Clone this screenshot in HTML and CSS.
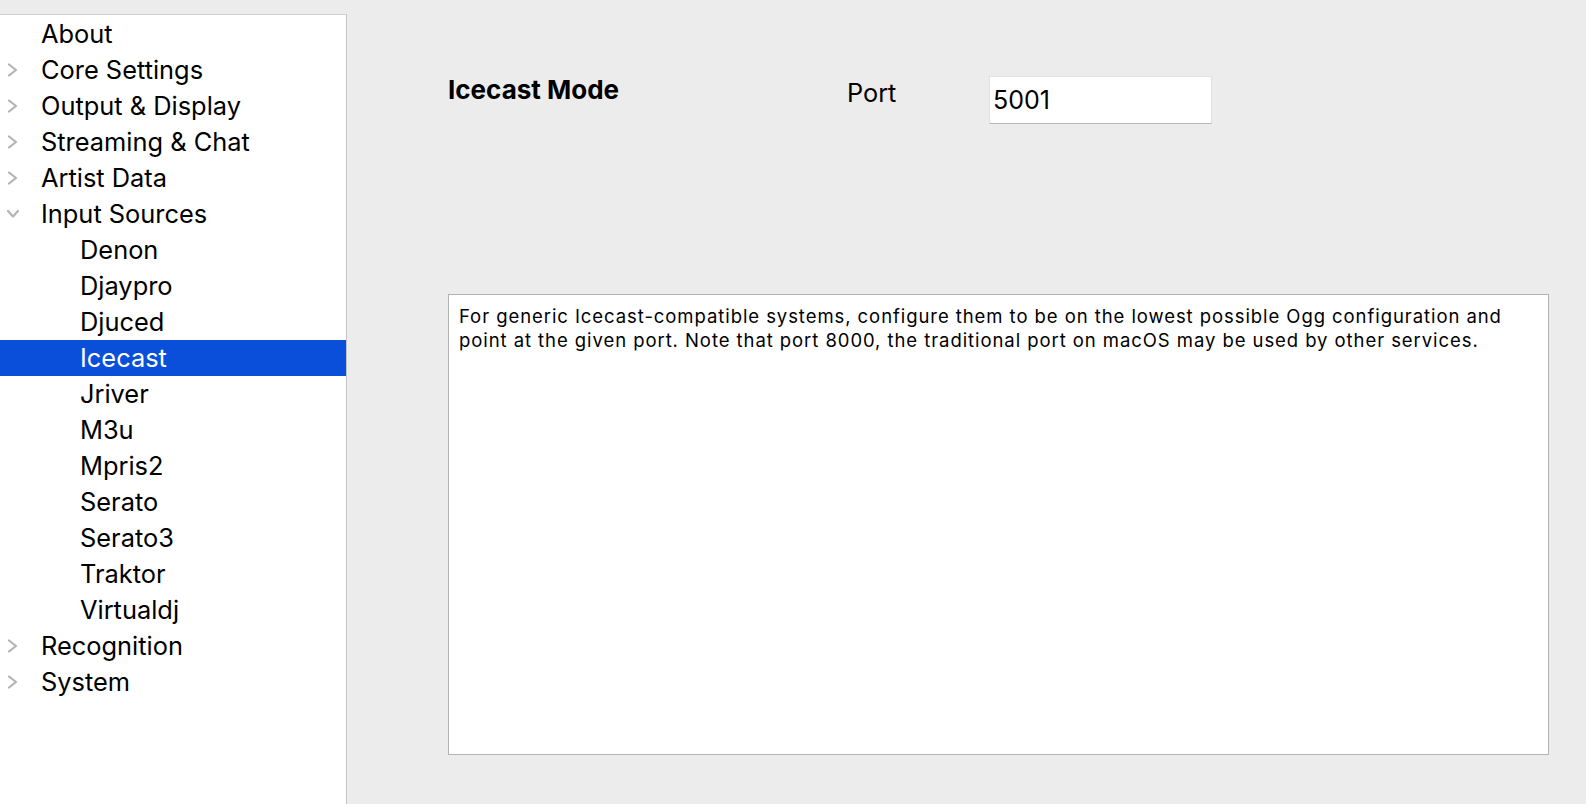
FILE: index.html
```html
<!DOCTYPE html>
<html>
<head>
<meta charset="utf-8">
<title>Icecast</title>
<link rel="stylesheet" href="styles.css">
</head>
<body>
<div class="window">
  <nav class="sidebar">
    <ul class="tree">
      <li class="row parent"><span class="twisty"></span><span class="label">About</span></li>
      <li class="row parent"><span class="twisty"><svg class="chev" width="12" height="14" viewBox="0 0 12 14"><polyline points="2,1.5 9,7 2,12.5"/></svg></span><span class="label">Core Settings</span></li>
      <li class="row parent"><span class="twisty"><svg class="chev" width="12" height="14" viewBox="0 0 12 14"><polyline points="2,1.5 9,7 2,12.5"/></svg></span><span class="label">Output &amp; Display</span></li>
      <li class="row parent"><span class="twisty"><svg class="chev" width="12" height="14" viewBox="0 0 12 14"><polyline points="2,1.5 9,7 2,12.5"/></svg></span><span class="label">Streaming &amp; Chat</span></li>
      <li class="row parent"><span class="twisty"><svg class="chev" width="12" height="14" viewBox="0 0 12 14"><polyline points="2,1.5 9,7 2,12.5"/></svg></span><span class="label">Artist Data</span></li>
      <li class="row parent"><span class="twisty"><svg class="chev" width="12" height="14" viewBox="0 0 12 14"><polyline points="1,4 6,9.5 11,4"/></svg></span><span class="label">Input Sources</span></li>
      <li class="row child"><span class="label">Denon</span></li>
      <li class="row child"><span class="label">Djaypro</span></li>
      <li class="row child"><span class="label">Djuced</span></li>
      <li class="row child selected"><span class="label">Icecast</span></li>
      <li class="row child"><span class="label">Jriver</span></li>
      <li class="row child"><span class="label">M3u</span></li>
      <li class="row child"><span class="label">Mpris2</span></li>
      <li class="row child"><span class="label">Serato</span></li>
      <li class="row child"><span class="label">Serato3</span></li>
      <li class="row child"><span class="label">Traktor</span></li>
      <li class="row child"><span class="label">Virtualdj</span></li>
      <li class="row parent"><span class="twisty"><svg class="chev" width="12" height="14" viewBox="0 0 12 14"><polyline points="2,1.5 9,7 2,12.5"/></svg></span><span class="label">Recognition</span></li>
      <li class="row parent"><span class="twisty"><svg class="chev" width="12" height="14" viewBox="0 0 12 14"><polyline points="2,1.5 9,7 2,12.5"/></svg></span><span class="label">System</span></li>
    </ul>
  </nav>
  <main class="content">
    <div class="header">
      <div class="title">Icecast Mode</div>
      <div class="port-label">Port</div>
      <div class="field">5001</div>
    </div>
    <div class="description">For generic Icecast-compatible systems, configure them to be on the lowest possible Ogg configuration and point at the given port. Note that port 8000, the traditional port on macOS may be used by other services.</div>
  </main>
</div>
</body>
</html>
```
FILE: styles.css
```css
html, body {
  margin: 0;
  padding: 0;
  height: 100%;
  background: #ececec;
  font-family: "Inter", "Liberation Sans", sans-serif;
  color: #000;
}
.window {
  display: flex;
  height: 100%;
  overflow: hidden;
}
.sidebar {
  flex: 0 0 346px;
  margin-top: 14px;
  background: #ffffff;
  border-top: 1px solid #cfcfcf;
  border-right: 1px solid #c4c4c4;
}
.tree {
  list-style: none;
  margin: 0;
  padding: 1px 0 0 0;
}
.row {
  display: flex;
  align-items: center;
  height: 36px;
  font-size: 25.4px;
  line-height: 36px;
  white-space: nowrap;
}
.parent {
  padding-left: 7px;
}
.twisty {
  flex: 0 0 34px;
  display: flex;
  align-items: center;
}
.chev {
  fill: none;
  stroke: #b3b3b3;
  stroke-width: 2.2;
  stroke-linecap: round;
  stroke-linejoin: round;
}
.child {
  padding-left: 80px;
}
.selected {
  background: #0a4fd9;
  color: #ffffff;
}
.content {
  flex: 1 1 auto;
  padding: 74px 0 0 101px;
}
.header {
  display: flex;
  align-items: flex-start;
}
.title {
  flex: 0 0 399px;
  font-size: 26px;
  font-weight: 700;
  line-height: 31px;
}
.port-label {
  flex: 0 0 142px;
  margin-top: 3px;
  font-size: 25.3px;
  line-height: 31px;
}
.field {
  box-sizing: border-box;
  width: 223px;
  height: 48px;
  margin-top: 2px;
  padding: 8px 0 0 3px;
  background: #ffffff;
  border: 1px solid #e2e2e2;
  border-bottom-color: #b9b9b9;
  font-size: 25px;
  line-height: 30px;
}
.description {
  box-sizing: border-box;
  width: 1101px;
  height: 461px;
  margin-top: 170px;
  padding: 9px 10px 0 10px;
  background: #ffffff;
  border: 1px solid #b3b3b3;
  font-size: 18.5px;
  line-height: 24px;
  letter-spacing: 0.93px;
}
```
